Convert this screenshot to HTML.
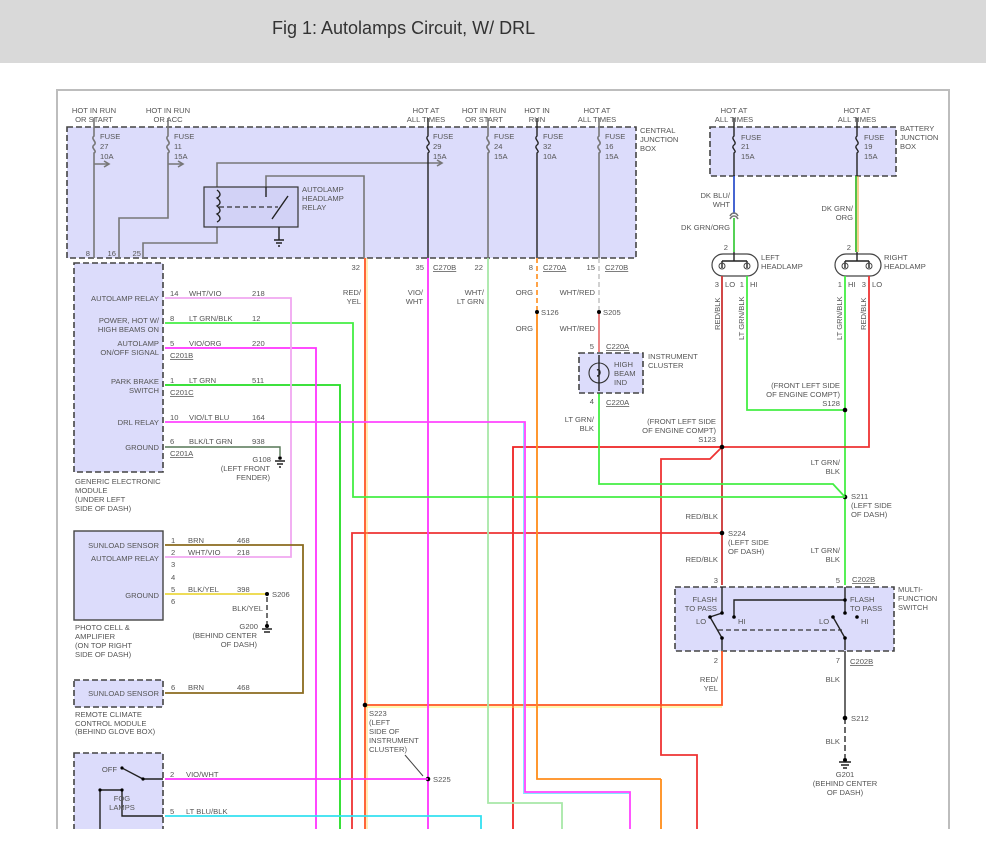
<!DOCTYPE html>
<html><head><meta charset="utf-8"><style>
html,body{margin:0;padding:0;background:#fff;}
svg{display:block;}
text{font-family:"Liberation Sans",sans-serif;font-size:7.6px;fill:#555;}
.t{font-size:18px;fill:#333;}
.bx{fill:#dcdcfb;stroke:#444;stroke-width:1.6;stroke-dasharray:6 3;}
.g{stroke:#777;stroke-width:1.6;fill:none;}
.k{stroke:#222;stroke-width:1.4;fill:none;}
.w{stroke-width:1.8;fill:none;}
.r{text-anchor:end;}
.m{text-anchor:middle;}
.u{text-decoration:underline;}
</style></head><body>
<svg width="986" height="844" viewBox="0 0 986 844" xmlns="http://www.w3.org/2000/svg">
<rect x="0" y="0" width="986" height="63" fill="#d9d9d9"/>
<text x="272" y="34" class="t">Fig 1: Autolamps Circuit, W/ DRL</text>
<path d="M57 829V90H949V829" stroke="#bdbdbd" stroke-width="2" fill="none"/>

<!-- central junction box -->
<rect x="67" y="127" width="569" height="131" class="bx"/>
<g class="m">
<text x="94" y="113">HOT IN RUN</text><text x="94" y="122">OR START</text>
<text x="168" y="113">HOT IN RUN</text><text x="168" y="122">OR ACC</text>
<text x="426" y="113">HOT AT</text><text x="426" y="122">ALL TIMES</text>
<text x="484" y="113">HOT IN RUN</text><text x="484" y="122">OR START</text>
<text x="537" y="113">HOT IN</text><text x="537" y="122">RUN</text>
<text x="597" y="113">HOT AT</text><text x="597" y="122">ALL TIMES</text>
</g>
<text x="640" y="133">CENTRAL</text><text x="640" y="142">JUNCTION</text><text x="640" y="151">BOX</text>
<g class="g">
<path d="M94 127V136c-4 3 4 6 0 9c-4 3 4 6 0 8V258M94 164H108"/>
<path d="M168 127V136c-4 3 4 6 0 9c-4 3 4 6 0 8V218H119V258M168 164H182"/>
<path d="M488 127V136c-4 3 4 6 0 9c-4 3 4 6 0 8V258"/>
<path d="M599 127V136c-4 3 4 6 0 9c-4 3 4 6 0 8V258"/>
<path d="M217 187V163H442M217 227V243H143V258"/>
<path d="M266 187V176H364V258"/>
</g>
<path d="M104 161L109 164L104 167M178 161L183 164L178 167M437 160L442 163L437 166" class="g"/>
<path d="M428 118V136c-4 3 4 6 0 9c-4 3 4 6 0 8V258M537 118V136c-4 3 4 6 0 9c-4 3 4 6 0 8V258" class="k"/>
<path d="M94 118V127M168 118V127M488 118V127M599 118V127" class="g"/>
<g>
<text x="100" y="139">FUSE</text><text x="100" y="149">27</text><text x="100" y="159">10A</text>
<text x="174" y="139">FUSE</text><text x="174" y="149">11</text><text x="174" y="159">15A</text>
<text x="433" y="139">FUSE</text><text x="433" y="149">29</text><text x="433" y="159">15A</text>
<text x="494" y="139">FUSE</text><text x="494" y="149">24</text><text x="494" y="159">15A</text>
<text x="543" y="139">FUSE</text><text x="543" y="149">32</text><text x="543" y="159">10A</text>
<text x="605" y="139">FUSE</text><text x="605" y="149">16</text><text x="605" y="159">15A</text>
</g>
<rect x="204" y="187" width="94" height="40" fill="#d2d2f6" stroke="#333" stroke-width="1.2"/>
<path d="M217 190c4 3 4 6 0 8c4 3 4 6 0 8c4 3 4 6 0 8c4 3 4 6 0 8" class="k"/>
<path d="M219 207H278" stroke="#333" stroke-width="1.2" stroke-dasharray="5 3"/>
<path d="M266 187V197M279 227V240M274 240H284M276 243H282M278 246H280M272 219L288 196" class="k"/>
<text x="302" y="192">AUTOLAMP</text><text x="302" y="201">HEADLAMP</text><text x="302" y="210">RELAY</text>
<text x="90" y="256" class="r">8</text><text x="116" y="256" class="r">16</text><text x="141" y="256" class="r">25</text>
<text x="360" y="270" class="r">32</text><text x="424" y="270" class="r">35</text><text x="433" y="270" class="u">C270B</text>
<text x="483" y="270" class="r">22</text><text x="533" y="270" class="r">8</text><text x="543" y="270" class="u">C270A</text>
<text x="595" y="270" class="r">15</text><text x="605" y="270" class="u">C270B</text>

<rect x="710" y="127" width="186" height="49" class="bx"/>
<text x="734" y="113" class="m">HOT AT</text><text x="734" y="122" class="m">ALL TIMES</text>
<text x="857" y="113" class="m">HOT AT</text><text x="857" y="122" class="m">ALL TIMES</text>
<path d="M734 118V136c-4 3 4 6 0 9c-4 3 4 6 0 8V176M857 118V136c-4 3 4 6 0 9c-4 3 4 6 0 8V176" class="k"/>
<text x="741" y="140">FUSE</text><text x="741" y="149">21</text><text x="741" y="159">15A</text>
<text x="864" y="140">FUSE</text><text x="864" y="149">19</text><text x="864" y="159">15A</text>
<text x="900" y="131">BATTERY</text><text x="900" y="140">JUNCTION</text><text x="900" y="149">BOX</text>
<path d="M734 176V214" stroke="#3355cc" class="w"/>
<path d="M734 218V252" stroke="#44cc44" class="w"/>
<path d="M730 216c2-4 6-4 8 0M730 219c2-4 6-4 8 0" class="g"/>
<path d="M856 176V252" stroke="#44bb33" class="w"/><path d="M858 176V252" stroke="#e8a020" stroke-width="1"/>
<text x="730" y="198" class="r">DK BLU/</text><text x="730" y="207" class="r">WHT</text>
<text x="730" y="230" class="r">DK GRN/ORG</text>
<text x="853" y="211" class="r">DK GRN/</text><text x="853" y="220" class="r">ORG</text>
<rect x="712" y="254" width="46" height="22" rx="11" fill="#fff" stroke="#444" stroke-width="1.2"/>
<rect x="835" y="254" width="46" height="22" rx="11" fill="#fff" stroke="#444" stroke-width="1.2"/>
<path d="M734 252V261M722 261H747M722 261V268M747 261V268M857 252V261M845 261H869M845 261V268M869 261V268" class="k"/>
<circle cx="722" cy="266" r="3" fill="none" stroke="#444"/><circle cx="747" cy="266" r="3" fill="none" stroke="#444"/>
<circle cx="845" cy="266" r="3" fill="none" stroke="#444"/><circle cx="869" cy="266" r="3" fill="none" stroke="#444"/>
<text x="728" y="250" class="r">2</text><text x="851" y="250" class="r">2</text>
<text x="761" y="260">LEFT</text><text x="761" y="269">HEADLAMP</text>
<text x="884" y="260">RIGHT</text><text x="884" y="269">HEADLAMP</text>
<text x="719" y="287" class="r">3</text><text x="725" y="287">LO</text><text x="744" y="287" class="r">1</text><text x="750" y="287">HI</text>
<text x="842" y="287" class="r">1</text><text x="848" y="287">HI</text><text x="866" y="287" class="r">3</text><text x="872" y="287">LO</text>
<text transform="translate(720,330) rotate(-90)">RED/BLK</text>
<text transform="translate(744,340) rotate(-90)">LT GRN/BLK</text>
<text transform="translate(842,340) rotate(-90)">LT GRN/BLK</text>
<text transform="translate(866,330) rotate(-90)">RED/BLK</text>

<path d="M747 276V410H845" stroke="#44ee44" class="w"/>
<path d="M845 276V585" stroke="#44ee44" class="w"/>
<path d="M869 276V447H722" stroke="#ee3333" class="w"/>
<path d="M722 276V585" stroke="#cc3333" class="w"/>
<path d="M722 447L710 459H661V755H697V829" stroke="#ee3333" class="w"/>
<path d="M722 447H513V829" stroke="#ee2222" class="w"/>
<path d="M722 533H352V829" stroke="#ee3333" class="w"/>
<circle cx="845" cy="410" r="2.3" fill="#000"/><circle cx="722" cy="447" r="2.3" fill="#000"/>
<circle cx="845" cy="497" r="2.3" fill="#000"/><circle cx="722" cy="533" r="2.3" fill="#000"/>
<text x="840" y="388" class="r">(FRONT LEFT SIDE</text><text x="840" y="397" class="r">OF ENGINE COMPT)</text><text x="840" y="406" class="r">S128</text>
<text x="716" y="424" class="r">(FRONT LEFT SIDE</text><text x="716" y="433" class="r">OF ENGINE COMPT)</text><text x="716" y="442" class="r">S123</text>
<text x="840" y="465" class="r">LT GRN/</text><text x="840" y="474" class="r">BLK</text>
<text x="851" y="499">S211</text><text x="851" y="508">(LEFT SIDE</text><text x="851" y="517">OF DASH)</text>
<text x="718" y="519" class="r">RED/BLK</text>
<text x="728" y="536">S224</text><text x="728" y="545">(LEFT SIDE</text><text x="728" y="554">OF DASH)</text>
<text x="718" y="562" class="r">RED/BLK</text>
<text x="840" y="553" class="r">LT GRN/</text><text x="840" y="562" class="r">BLK</text>

<rect x="675" y="587" width="219" height="64" class="bx"/>
<text x="718" y="583" class="r">3</text><text x="840" y="583" class="r">5</text><text x="852" y="582" class="u">C202B</text>
<path d="M722 587V613L710 617L722 638V650M734 617V600H845V613M845 587V613M833 617L845 638V650" class="k"/>
<path d="M718 630H842" stroke="#333" stroke-width="1.2" stroke-dasharray="5 3"/>
<circle cx="722" cy="613" r="1.8" fill="#000"/><circle cx="710" cy="617" r="1.8" fill="#000"/><circle cx="734" cy="617" r="1.8" fill="#000"/><circle cx="722" cy="638" r="1.8" fill="#000"/>
<circle cx="845" cy="600" r="1.8" fill="#000"/><circle cx="845" cy="613" r="1.8" fill="#000"/><circle cx="833" cy="617" r="1.8" fill="#000"/><circle cx="857" cy="617" r="1.8" fill="#000"/><circle cx="845" cy="638" r="1.8" fill="#000"/>
<text x="717" y="602" class="r">FLASH</text><text x="717" y="611" class="r">TO PASS</text>
<text x="696" y="624">LO</text><text x="738" y="624">HI</text>
<text x="850" y="602">FLASH</text><text x="850" y="611">TO PASS</text>
<text x="819" y="624">LO</text><text x="861" y="624">HI</text>
<text x="898" y="592">MULTI-</text><text x="898" y="601">FUNCTION</text><text x="898" y="610">SWITCH</text>
<text x="718" y="663" class="r">2</text><text x="840" y="663" class="r">7</text><text x="850" y="664" class="u">C202B</text>
<path d="M722 651V705H365" stroke="#ff5522" class="w"/><path d="M365 707H722" stroke="#ffee33" stroke-width="0.8"/>
<text x="718" y="682" class="r">RED/</text><text x="718" y="691" class="r">YEL</text>
<path d="M845 651V718" stroke="#444" stroke-width="1.6"/>
<path d="M845 718V758" stroke="#444" stroke-width="1.6" stroke-dasharray="6 3"/>
<circle cx="845" cy="718" r="2.3" fill="#000"/><circle cx="845" cy="760" r="2" fill="#000"/>
<path d="M839 762H851M841 765H849M843 768H847" class="k"/>
<text x="840" y="682" class="r">BLK</text><text x="851" y="721">S212</text><text x="840" y="744" class="r">BLK</text>
<text x="845" y="777" class="m">G201</text><text x="845" y="786" class="m">(BEHIND CENTER</text><text x="845" y="795" class="m">OF DASH)</text>

<path d="M365 258V705V829" stroke="#ff5522" class="w"/><path d="M367 258V829" stroke="#ffcc33" stroke-width="0.7"/>
<path d="M428 258V829" stroke="#ff33ff" class="w"/>
<path d="M488 258V803H562V829" stroke="#a8e8a8" class="w"/>
<path d="M537 258V312" stroke="#ff9933" class="w" stroke-dasharray="5 3"/>
<path d="M537 312V779H661" stroke="#ff8c1a" class="w"/><path d="M661 779V829" stroke="#ff8c1a" class="w"/>
<path d="M599 258V312" stroke="#cccccc" class="w" stroke-dasharray="5 3"/>
<path d="M599 312V352" stroke="#dd3333" stroke-width="1.2"/>
<path d="M599 393V484H833L845 497" stroke="#44ee44" class="w"/>
<path d="M165 323H353V497H845" stroke="#44ee44" class="w"/>
<path d="M165 385H340V829" stroke="#22dd22" class="w"/>
<path d="M165 348H316V829" stroke="#ff33ff" class="w"/>
<path d="M165 298H291V557H165" stroke="#f0a8f0" class="w"/>
<path d="M165 422H525V792H630V829" stroke="#ff44ff" class="w"/><path d="M523.5 423V793.5H629" stroke="#55ddff" stroke-width="0.7" fill="none"/>
<path d="M165 447H280V456" stroke="#557755" stroke-width="1.4" fill="none"/>
<circle cx="365" cy="705" r="2.3" fill="#000"/><circle cx="428" cy="779" r="2.3" fill="#000"/>
<circle cx="537" cy="312" r="2" fill="#000"/><circle cx="599" cy="312" r="2" fill="#000"/>
<text x="361" y="295" class="r">RED/</text><text x="361" y="304" class="r">YEL</text>
<text x="423" y="295" class="r">VIO/</text><text x="423" y="304" class="r">WHT</text>
<text x="484" y="295" class="r">WHT/</text><text x="484" y="304" class="r">LT GRN</text>
<text x="533" y="295" class="r">ORG</text><text x="533" y="331" class="r">ORG</text><text x="541" y="315">S126</text>
<text x="595" y="295" class="r">WHT/RED</text><text x="595" y="331" class="r">WHT/RED</text><text x="603" y="315">S205</text>
<rect x="579" y="353" width="64" height="40" class="bx"/>
<circle cx="599" cy="373" r="10" fill="none" stroke="#333" stroke-width="1.1"/>
<path d="M599 355V391M597 370c4-2 4 6 0 6" class="k"/>
<text x="594" y="349" class="r">5</text><text x="606" y="349" class="u">C220A</text>
<text x="594" y="404" class="r">4</text><text x="606" y="405" class="u">C220A</text>
<text x="614" y="367">HIGH</text><text x="614" y="376">BEAM</text><text x="614" y="385">IND</text>
<text x="648" y="359">INSTRUMENT</text><text x="648" y="368">CLUSTER</text>
<text x="594" y="422" class="r">LT GRN/</text><text x="594" y="431" class="r">BLK</text>

<rect x="74" y="263" width="89" height="209" class="bx"/>
<g class="r">
<text x="159" y="301">AUTOLAMP RELAY</text>
<text x="159" y="323">POWER, HOT W/</text><text x="159" y="332">HIGH BEAMS ON</text>
<text x="159" y="346">AUTOLAMP</text><text x="159" y="355">ON/OFF SIGNAL</text>
<text x="159" y="384">PARK BRAKE</text><text x="159" y="393">SWITCH</text>
<text x="159" y="425">DRL RELAY</text>
<text x="159" y="450">GROUND</text>
</g>
<g>
<text x="170" y="296">14</text><text x="189" y="296">WHT/VIO</text><text x="252" y="296">218</text>
<text x="170" y="321">8</text><text x="189" y="321">LT GRN/BLK</text><text x="252" y="321">12</text>
<text x="170" y="346">5</text><text x="189" y="346">VIO/ORG</text><text x="252" y="346">220</text><text x="170" y="358" class="u">C201B</text>
<text x="170" y="383">1</text><text x="189" y="383">LT GRN</text><text x="252" y="383">511</text><text x="170" y="395" class="u">C201C</text>
<text x="170" y="420">10</text><text x="189" y="420">VIO/LT BLU</text><text x="252" y="420">164</text>
<text x="170" y="444">6</text><text x="189" y="444">BLK/LT GRN</text><text x="252" y="444">938</text><text x="170" y="456" class="u">C201A</text>
</g>
<circle cx="280" cy="458" r="1.8" fill="#000"/><path d="M275 461H285M277 464H283M279 467H281" class="k"/>
<text x="271" y="462" class="r">G108</text><text x="270" y="471" class="r">(LEFT FRONT</text><text x="270" y="480" class="r">FENDER)</text>
<text x="75" y="484">GENERIC ELECTRONIC</text><text x="75" y="493">MODULE</text><text x="75" y="502">(UNDER LEFT</text><text x="75" y="511">SIDE OF DASH)</text>

<rect x="74" y="531" width="89" height="89" fill="#dcdcfb" stroke="#444" stroke-width="1.4"/>
<text x="159" y="548" class="r">SUNLOAD SENSOR</text><text x="159" y="561" class="r">AUTOLAMP RELAY</text><text x="159" y="598" class="r">GROUND</text>
<text x="171" y="543">1</text><text x="171" y="555">2</text><text x="171" y="567">3</text><text x="171" y="580">4</text><text x="171" y="592">5</text><text x="171" y="604">6</text>
<text x="188" y="543">BRN</text><text x="237" y="543">468</text>
<text x="188" y="555">WHT/VIO</text><text x="237" y="555">218</text>
<text x="188" y="592">BLK/YEL</text><text x="237" y="592">398</text>
<path d="M165 545H303V693H165" stroke="#8b6b1f" class="w"/>
<path d="M165 594H265" stroke="#e8d020" stroke-width="1.4"/>
<circle cx="267" cy="594" r="2" fill="#000"/><path d="M267 597V625" stroke="#333" stroke-width="1.4" stroke-dasharray="5 3"/>
<circle cx="267" cy="626" r="2" fill="#000"/><path d="M262 629H272M264 632H270" class="k"/>
<text x="272" y="597">S206</text><text x="263" y="611" class="r">BLK/YEL</text>
<text x="258" y="629" class="r">G200</text><text x="257" y="638" class="r">(BEHIND CENTER</text><text x="257" y="647" class="r">OF DASH)</text>
<text x="75" y="630">PHOTO CELL &amp;</text><text x="75" y="639">AMPLIFIER</text><text x="75" y="648">(ON TOP RIGHT</text><text x="75" y="657">SIDE OF DASH)</text>

<rect x="74" y="680" width="89" height="27" class="bx"/>
<text x="159" y="696" class="r">SUNLOAD SENSOR</text>
<text x="171" y="690">6</text><text x="188" y="690">BRN</text><text x="237" y="690">468</text>
<text x="75" y="717">REMOTE CLIMATE</text><text x="75" y="726">CONTROL MODULE</text><text x="75" y="734">(BEHIND GLOVE BOX)</text>

<text x="369" y="716">S223</text><text x="369" y="725">(LEFT</text><text x="369" y="734">SIDE OF</text><text x="369" y="743">INSTRUMENT</text><text x="369" y="752">CLUSTER)</text>
<path d="M405 755L423 776" stroke="#444" stroke-width="1"/>
<text x="433" y="782">S225</text>

<rect x="74" y="753" width="89" height="80" class="bx"/>
<text x="117" y="772" class="r">OFF</text>
<path d="M122 768L143 779H163M100 790H122V816H163M100 790V829" class="k"/>
<circle cx="122" cy="768" r="1.6" fill="#000"/><circle cx="143" cy="779" r="1.6" fill="#000"/><circle cx="100" cy="790" r="1.6" fill="#000"/><circle cx="122" cy="790" r="1.6" fill="#000"/>
<text x="122" y="801" class="m">FOG</text><text x="122" y="810" class="m">LAMPS</text>
<text x="170" y="777">2</text><text x="186" y="777">VIO/WHT</text>
<text x="170" y="814">5</text><text x="186" y="814">LT BLU/BLK</text>
<path d="M165 779H428" stroke="#ff33ff" class="w"/>
<path d="M165 816H481V829" stroke="#33e0f0" class="w"/>
<rect x="0" y="829" width="986" height="15" fill="#fff"/>
</svg>
</body></html>
